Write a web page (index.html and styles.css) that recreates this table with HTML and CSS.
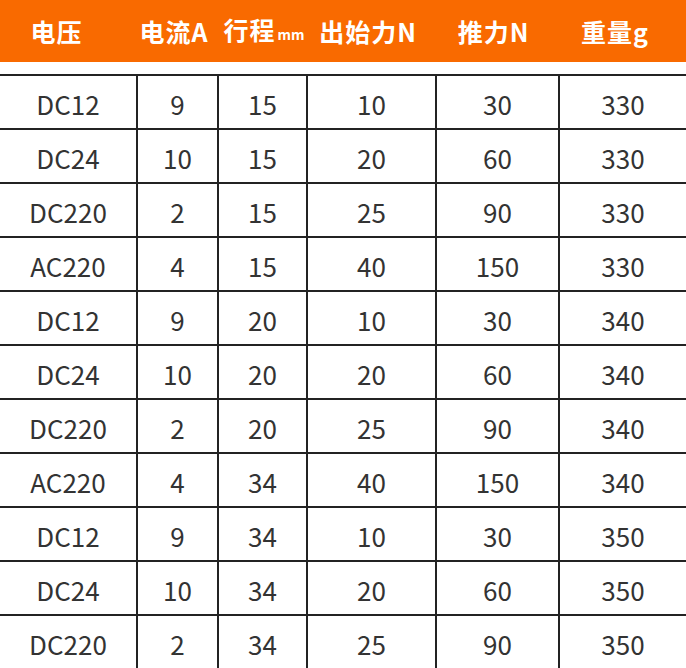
FILE: index.html
```html
<!DOCTYPE html>
<html lang="zh">
<head>
<meta charset="utf-8">
<title>参数表</title>
<link rel="stylesheet" href="styles.css">
</head>
<body>
<div class="head">
  <div class="hc">电压</div>
  <div class="hc">电流A</div>
  <div class="hc">行程<span class="unit">mm</span></div>
  <div class="hc">出始力N</div>
  <div class="hc">推力N</div>
  <div class="hc">重量g</div>
</div>
<div class="table">
  <div class="row"><div class="c">DC12</div><div class="c">9</div><div class="c">15</div><div class="c">10</div><div class="c">30</div><div class="c">330</div></div>
  <div class="row"><div class="c">DC24</div><div class="c">10</div><div class="c">15</div><div class="c">20</div><div class="c">60</div><div class="c">330</div></div>
  <div class="row"><div class="c">DC220</div><div class="c">2</div><div class="c">15</div><div class="c">25</div><div class="c">90</div><div class="c">330</div></div>
  <div class="row"><div class="c">AC220</div><div class="c">4</div><div class="c">15</div><div class="c">40</div><div class="c">150</div><div class="c">330</div></div>
  <div class="row"><div class="c">DC12</div><div class="c">9</div><div class="c">20</div><div class="c">10</div><div class="c">30</div><div class="c">340</div></div>
  <div class="row"><div class="c">DC24</div><div class="c">10</div><div class="c">20</div><div class="c">20</div><div class="c">60</div><div class="c">340</div></div>
  <div class="row"><div class="c">DC220</div><div class="c">2</div><div class="c">20</div><div class="c">25</div><div class="c">90</div><div class="c">340</div></div>
  <div class="row"><div class="c">AC220</div><div class="c">4</div><div class="c">34</div><div class="c">40</div><div class="c">150</div><div class="c">340</div></div>
  <div class="row"><div class="c">DC12</div><div class="c">9</div><div class="c">34</div><div class="c">10</div><div class="c">30</div><div class="c">350</div></div>
  <div class="row"><div class="c">DC24</div><div class="c">10</div><div class="c">34</div><div class="c">20</div><div class="c">60</div><div class="c">350</div></div>
  <div class="row"><div class="c">DC220</div><div class="c">2</div><div class="c">34</div><div class="c">25</div><div class="c">90</div><div class="c">350</div></div>
</div>
</body>
</html>
```
FILE: styles.css
```css
html, body {
  margin: 0;
  padding: 0;
  background: #ffffff;
}
body {
  width: 686px;
  height: 668px;
  overflow: hidden;
  font-family: "Noto Sans CJK SC", "Noto Sans", sans-serif;
}
.head {
  height: 62px;
  background: #f96a00;
  display: grid;
  grid-template-columns: 113px 122px 58px 150px 101px 142px;
  align-items: center;
  margin-bottom: 12px;
}
.hc {
  display: flex;
  justify-content: center;
  align-items: baseline;
  white-space: nowrap;
  color: #ffffff;
  font-weight: 700;
  font-size: 25px;
  line-height: 30px;
  letter-spacing: 1px;
}
.unit {
  font-size: 14px;
  font-weight: 700;
  margin-left: 2px;
  letter-spacing: 0;
}
.table {
  border-top: 2px solid #232323;
}
.row {
  display: grid;
  grid-template-columns: 138px 81px 89px 129px 123px 126px;
  height: 54px;
  box-sizing: border-box;
  border-bottom: 2px solid #232323;
}
.c {
  border-right: 2px solid #232323;
  display: flex;
  justify-content: center;
  align-items: center;
  padding-top: 3px;
  box-sizing: border-box;
  color: #333333;
  font-size: 26px;
  line-height: 30px;
}
.c:last-child {
  border-right: none;
}
```
